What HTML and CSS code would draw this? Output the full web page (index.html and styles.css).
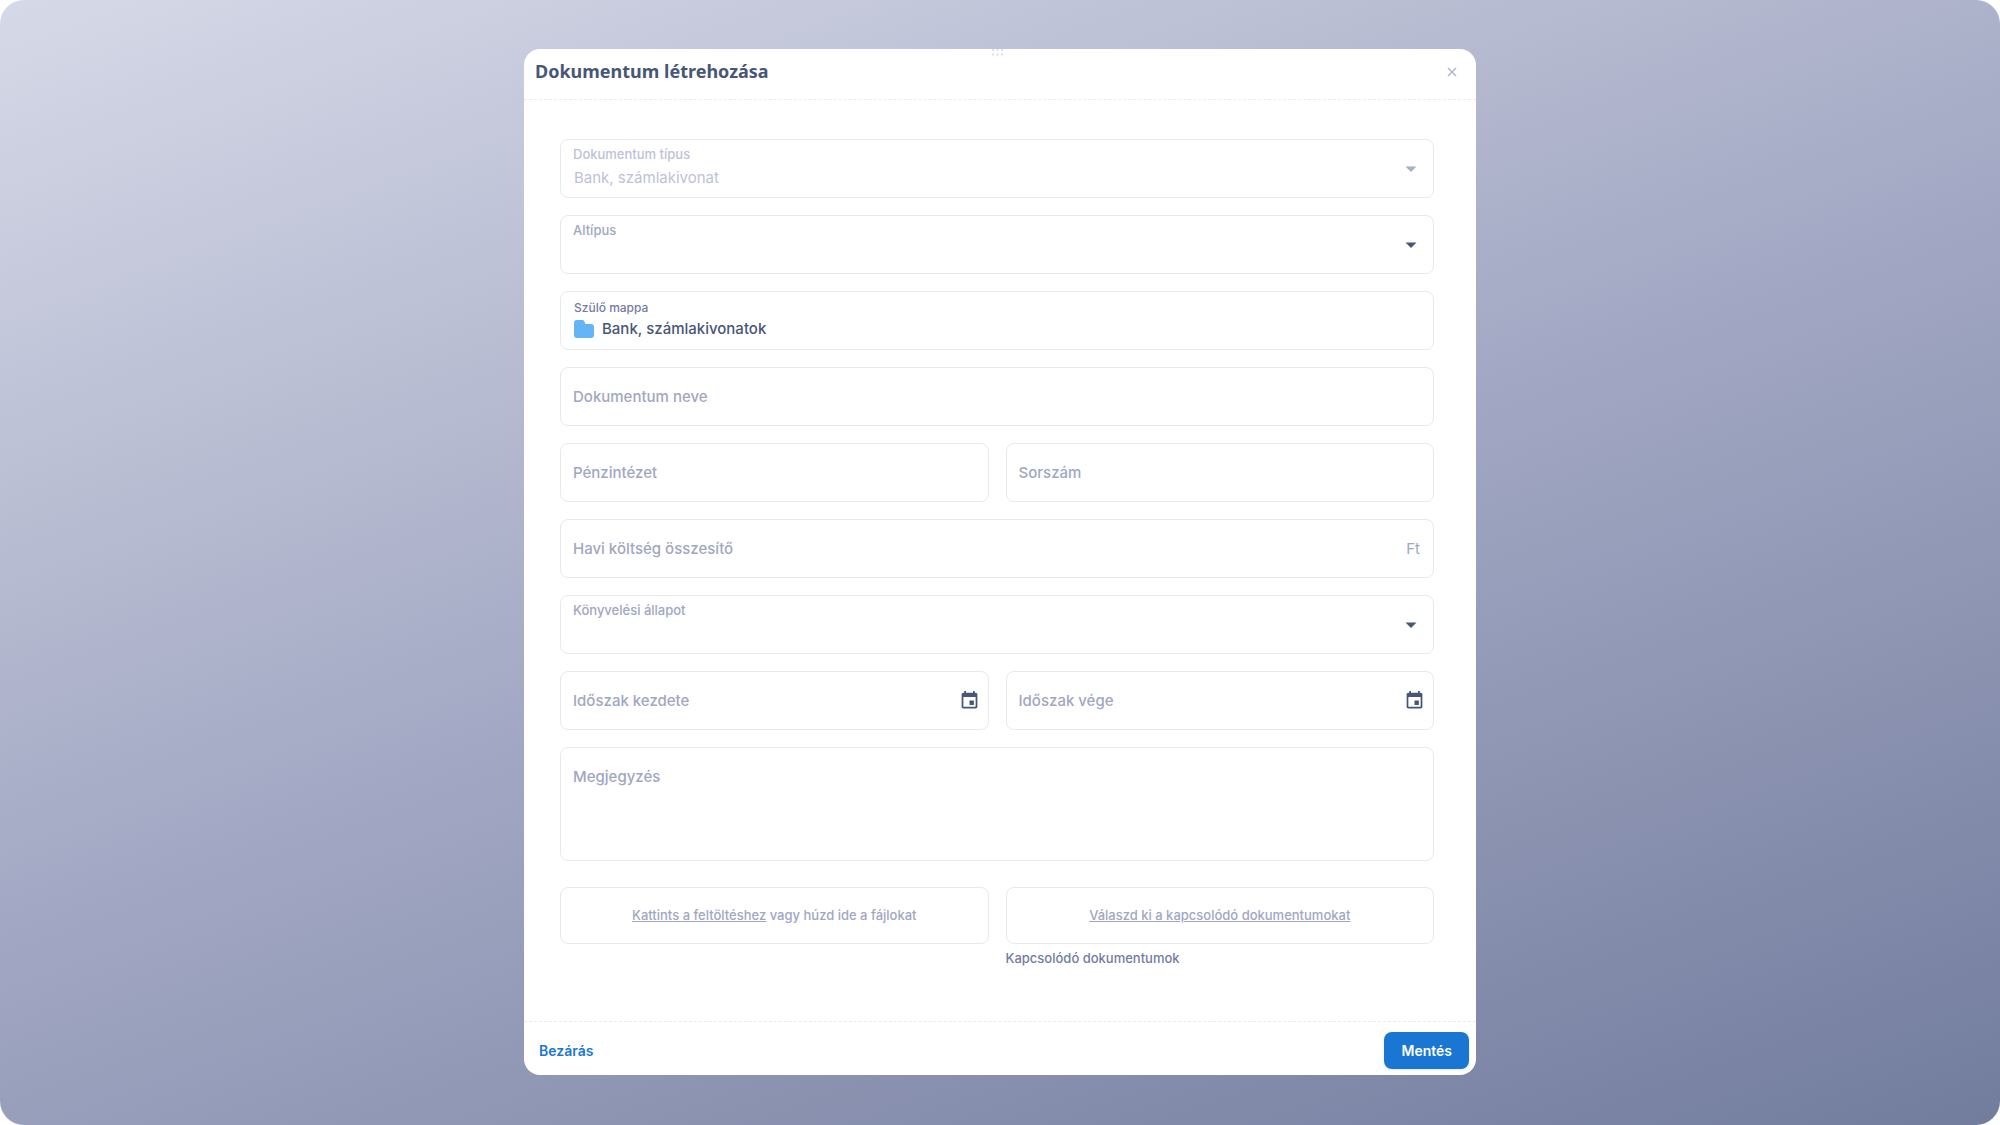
FILE: index.html
```html
<!DOCTYPE html>
<html lang="hu">
<head>
  <meta charset="UTF-8">
  <meta name="viewport" content="width=device-width, initial-scale=1.0">
  <title>Dokumentum létrehozása</title>
  <link rel="stylesheet" href="styles.css">
</head>
<body>

  <div class="page">
    <form class="modal" role="dialog" aria-labelledby="modal-title">

      <div class="modal-header">
        <svg class="drag-handle" width="18" height="8" viewBox="0 0 18 8">
          <circle cx="2" cy="1" r="1.2"/><circle cx="6.5" cy="1" r="1.2"/><circle cx="11" cy="1" r="1.2"/>
          <circle cx="2" cy="5.5" r="1.2"/><circle cx="6.5" cy="5.5" r="1.2"/><circle cx="11" cy="5.5" r="1.2"/>
        </svg>
        <h1 id="modal-title">Dokumentum létrehozása</h1>
        <button type="button" class="close-btn" aria-label="Ablak bezárása">
          <svg width="10" height="10" viewBox="0 0 10 10"><path d="M1 1l8 8M9 1l-8 8"/></svg>
        </button>
      </div>

      <div class="modal-body">
        <div class="field disabled">
          <div class="stack">
            <label for="doc-type">Dokumentum típus</label>
            <select id="doc-type" disabled>
              <option>Bank, számlakivonat</option>
            </select>
          </div>
          <svg class="arrow" width="24" height="24" viewBox="0 0 24 24"><path d="M6.5 9.5h11L12 15z"/></svg>
        </div>

        <div class="field">
          <div class="stack">
            <label for="subtype">Altípus</label>
            <select id="subtype">
              <option></option>
            </select>
          </div>
          <svg class="arrow" width="24" height="24" viewBox="0 0 24 24"><path d="M6.5 9.5h11L12 15z"/></svg>
        </div>

        <div class="field">
          <div class="stack parent-folder">
            <span class="folder-label">Szülő mappa</span>
            <div class="folder">
              <svg width="20" height="18" viewBox="0 0 20 18"><path d="M3 0h5.500q1.500 0 2 1.500l.8 2.500H17q3 0 3 3v8q0 3-3 3H3q-3 0-3-3V3q0-3 3-3z"/></svg>
              <span>Bank, számlakivonatok</span>
            </div>
          </div>
        </div>

        <div class="field">
          <label for="doc-name">Dokumentum neve</label>
          <input type="text" id="doc-name">
        </div>

        <div class="row">
          <div class="field">
            <label for="bank">Pénzintézet</label>
            <input type="text" id="bank">
          </div>
          <div class="field">
            <label for="serial">Sorszám</label>
            <input type="text" id="serial">
          </div>
        </div>

        <div class="field">
          <label for="cost">Havi költség összesítő</label>
          <input type="text" id="cost">
          <span class="unit">Ft</span>
        </div>

        <div class="field">
          <div class="stack">
            <label for="accounting">Könyvelési állapot</label>
            <select id="accounting">
              <option></option>
            </select>
          </div>
          <svg class="arrow" width="24" height="24" viewBox="0 0 24 24"><path d="M6.5 9.5h11L12 15z"/></svg>
        </div>

        <div class="row">
          <div class="field date">
            <label for="date-from">Időszak kezdete</label>
            <input type="text" id="date-from">
            <button type="button" class="date-btn" aria-label="Kezdő dátum választása">
              <svg width="21" height="21" viewBox="0 0 24 24"><path d="M17 12h-5v5h5v-5zM16 1v2H8V1H6v2H5c-1.110 0-1.990.9-1.990 2L3 19c0 1.100.89 2 2 2h14c1.100 0 2-.9 2-2V5c0-1.100-.9-2-2-2h-1V1h-2zm3 18H5V8h14v11z"/></svg>
            </button>
          </div>
          <div class="field date">
            <label for="date-to">Időszak vége</label>
            <input type="text" id="date-to">
            <button type="button" class="date-btn" aria-label="Záró dátum választása">
              <svg width="21" height="21" viewBox="0 0 24 24"><path d="M17 12h-5v5h5v-5zM16 1v2H8V1H6v2H5c-1.110 0-1.990.9-1.990 2L3 19c0 1.100.89 2 2 2h14c1.100 0 2-.9 2-2V5c0-1.100-.9-2-2-2h-1V1h-2zm3 18H5V8h14v11z"/></svg>
            </button>
          </div>
        </div>

        <div class="field note">
          <label for="note">Megjegyzés</label>
          <textarea id="note" rows="4"></textarea>
        </div>

        <div class="row uploads">
          <div class="upload-box">
            <p><a href="#">Kattints a feltöltéshez</a> vagy húzd ide a fájlokat</p>
          </div>
          <div>
            <div class="upload-box">
              <p><a href="#">Válaszd ki a kapcsolódó dokumentumokat</a></p>
            </div>
            <p class="caption">Kapcsolódó dokumentumok</p>
          </div>
        </div>
      </div>

      <div class="modal-footer">
        <button type="button" class="link-btn">Bezárás</button>
        <button type="submit" class="save-btn">Mentés</button>
      </div>

    </form>
  </div>

</body>
</html>
```
FILE: styles.css
```css
* {
  box-sizing: border-box;
}
body {
  margin: 0;
  background: #fff;
  font-family: Inter, sans-serif;
  color: #475677;
}
h1, p {
  margin: 0;
}
button, input, select, textarea {
  font-family: inherit;
  color: inherit;
  background: none;
  border: none;
  padding: 0;
  margin: 0;
  outline: none;
}
button {
  cursor: pointer;
}

.page {
  display: flex;
  justify-content: center;
  align-items: flex-start;
  min-height: 100vh;
  padding: 49px 24px;
  border-radius: 24px;
  background: linear-gradient(160deg, #d6d9e7, #a3a9c4 49%, #727c9d);
}
.modal {
  width: 100%;
  max-width: 952px;
  background: #fff;
  border-radius: 16px;
}

/* Header */
.modal-header {
  position: relative;
  display: flex;
  justify-content: space-between;
  align-items: center;
  padding: 0 19px 5px 11px;
  border-bottom: 1px dashed #ececef;
}
.modal-header h1 {
  font: 700 18px/45px "Noto Sans", sans-serif;
}
.drag-handle {
  position: absolute;
  top: 0;
  left: 50%;
  transform: translateX(-50%);
  fill: #e0e2ea;
}
.close-btn {
  display: flex;
}
.close-btn svg {
  fill: none;
  stroke: #b0b7d0;
  stroke-width: 1.500;
}

/* Form fields */
.modal-body {
  display: flex;
  flex-direction: column;
  gap: 17px;
  padding: 39px 42px 54px 36px;
}
.row {
  display: grid;
  grid-template-columns: 1fr 1fr;
  align-items: start;
  gap: 17px;
}
.field {
  display: flex;
  align-items: center;
  min-height: 59px;
  padding: 0 10px 0 12px;
  border: 1px solid #e8e9ed;
  border-radius: 8px;
}
.field label {
  font-size: 15px;
  font-weight: 500;
  line-height: 20px;
  color: #a0a7c3;
}
.field input {
  flex: 1;
  min-width: 0;
  height: 40px;
  padding: 0 8px;
  font-size: 15px;
}
.stack {
  display: flex;
  flex: 1;
  flex-direction: column;
  gap: 6px;
  padding-bottom: 3px;
}
.field .stack label {
  font-size: 13px;
  line-height: 16px;
}
.stack select {
  appearance: none;
  height: 20px;
  padding-left: 1px;
  font-size: 15px;
  line-height: 20px;
}
.arrow {
  fill: #475677;
}
.disabled .stack label,
.disabled select {
  color: #bcc2d9;
  opacity: 1;
}
.disabled .arrow {
  fill: #a8aec8;
}
.parent-folder {
  gap: 3px;
  padding-left: 1px;
}
.folder-label {
  font-size: 12px;
  font-weight: 500;
  line-height: 16px;
  color: #727ca2;
}
.folder {
  display: flex;
  align-items: center;
  gap: 8px;
  font-size: 15px;
  font-weight: 500;
  line-height: 20px;
}
.folder svg {
  fill: #64b5f6;
}
.unit {
  padding-right: 3px;
  font-size: 15px;
  color: #a0a7c3;
}
.date {
  padding-right: 8px;
}
.date-btn {
  display: flex;
}
.date-btn svg {
  fill: #475677;
}
.note {
  align-items: flex-start;
  padding-top: 19px;
}
.note textarea {
  flex: 1;
  height: 93px;
  padding: 0 8px;
  font-size: 15px;
  line-height: 20px;
  resize: none;
}

/* Uploads */
.uploads {
  padding-top: 9px;
}
.upload-box {
  display: flex;
  justify-content: center;
  align-items: center;
  min-height: 57px;
  padding-bottom: 2px;
  border: 1px solid #e8e9ed;
  border-radius: 8px;
  font-size: 13px;
  font-weight: 500;
  color: #a0a7c3;
}
.upload-box a {
  color: inherit;
}
.caption {
  padding-top: 5px;
  font-size: 13px;
  font-weight: 500;
  line-height: 18px;
  color: #727ca2;
}

/* Footer */
.modal-footer {
  display: flex;
  justify-content: space-between;
  align-items: center;
  padding: 10px 7px 6px 15px;
  border-top: 1px dashed #ececef;
}
.link-btn {
  font-size: 14px;
  font-weight: 600;
  color: #1976d2;
}
.save-btn {
  height: 37px;
  padding: 0 17px;
  border-radius: 8px;
  background: #1976d2;
  box-shadow: 0 1px 3px rgba(0, 0, 0, 0.1);
  color: #fff;
  font-size: 14px;
  font-weight: 600;
}
```
